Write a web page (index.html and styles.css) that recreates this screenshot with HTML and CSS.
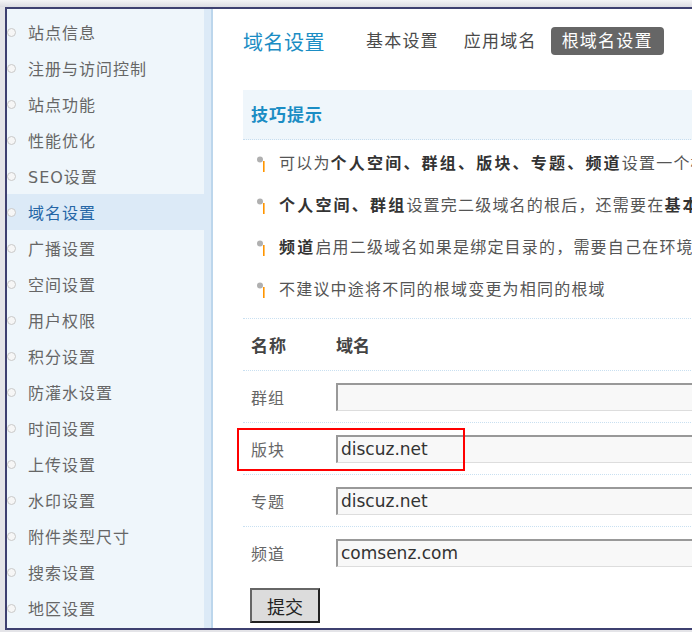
FILE: index.html
```html
<!DOCTYPE html>
<html lang="zh-CN">
<head>
    <meta charset="UTF-8">
    <title>域名设置</title>
    <link rel="stylesheet" href="styles.css">
</head>
<body>
    <div class="frame">
        <!-- 左侧菜单 -->
        <ul class="side-menu">
            <li><i></i>站点信息</li>
            <li><i></i>注册与访问控制</li>
            <li><i></i>站点功能</li>
            <li><i></i>性能优化</li>
            <li><i></i>SEO设置</li>
            <li class="active"><i></i>域名设置</li>
            <li><i></i>广播设置</li>
            <li><i></i>空间设置</li>
            <li><i></i>用户权限</li>
            <li><i></i>积分设置</li>
            <li><i></i>防灌水设置</li>
            <li><i></i>时间设置</li>
            <li><i></i>上传设置</li>
            <li><i></i>水印设置</li>
            <li><i></i>附件类型尺寸</li>
            <li><i></i>搜索设置</li>
            <li><i></i>地区设置</li>
        </ul>

        <!-- 主内容 -->
        <div class="main">
            <div class="page-head">
                <h3>域名设置</h3>
                <div class="tabs">
                    <a>基本设置</a>
                    <a>应用域名</a>
                    <a class="current">根域名设置</a>
                </div>
            </div>

            <div class="tips-title">技巧提示</div>
            <ul class="tips">
                <li><svg width="10" height="20" viewBox="0 0 10 20"><circle cx="3" cy="7.5" r="3" fill="#b0b0b0"/><rect x="6" y="9" width="1.6" height="11" fill="#ff9500"/></svg><span>可以为<b>个人空间、群组、版块、专题、频道</b>设置一个根域名</span></li>
                <li><svg width="10" height="20" viewBox="0 0 10 20"><circle cx="3" cy="7.5" r="3" fill="#b0b0b0"/><rect x="6" y="9" width="1.6" height="11" fill="#ff9500"/></svg><span><b>个人空间、群组</b>设置完二级域名的根后，还需要在<b>基本设置</b>中开启</span></li>
                <li><svg width="10" height="20" viewBox="0 0 10 20"><circle cx="3" cy="7.5" r="3" fill="#b0b0b0"/><rect x="6" y="9" width="1.6" height="11" fill="#ff9500"/></svg><span><b>频道</b>启用二级域名如果是绑定目录的，需要自己在环境中配置</span></li>
                <li><svg width="10" height="20" viewBox="0 0 10 20"><circle cx="3" cy="7.5" r="3" fill="#b0b0b0"/><rect x="6" y="9" width="1.6" height="11" fill="#ff9500"/></svg><span>不建议中途将不同的根域变更为相同的根域</span></li>
            </ul>

            <div class="domain-table">
                <div class="row header">
                    <div class="label">名称</div>
                    <div class="value">域名</div>
                </div>
                <div class="row">
                    <div class="label">群组</div>
                    <input class="value" type="text" value="">
                </div>
                <div class="row">
                    <div class="label">版块</div>
                    <input class="value" type="text" value="discuz.net">
                </div>
                <div class="row">
                    <div class="label">专题</div>
                    <input class="value" type="text" value="discuz.net">
                </div>
                <div class="row">
                    <div class="label">频道</div>
                    <input class="value" type="text" value="comsenz.com">
                </div>
                <!-- 红框标注 -->
                <div class="mark"></div>
            </div>
            <button class="btn">提交</button>
        </div>
    </div>
</body>
</html>
```

FILE: styles.css
```css
html, body {
    overflow: hidden;
}
body {
    margin: 0;
    height: 632px;
    font-family: "DejaVu Sans", "Noto Sans CJK SC", sans-serif;
    background: linear-gradient(#f4f4f6, #dcdce2 7px, #e4e4e8 7px);
}
.frame {
    display: flex;
    box-sizing: border-box;
    width: 1100px;
    height: 623px;
    margin: 7px 0 0 5px;
    border: 2px solid #3e4070;
    border-right: none;
    background: #fff;
}
.side-menu {
    list-style: none;
    margin: 0;
    padding: 5px 0 0 0;
    box-sizing: border-box;
    width: 206px;
    flex-shrink: 0;
    border-right: 2px solid #bcd6ec;
    background: linear-gradient(to right, #eff6fb 197px, #dceaf7 197px);
}
.side-menu li {
    display: flex;
    align-items: center;
    height: 36px;
    font-size: 16px;
    letter-spacing: 1px;
    color: #666;
}
.side-menu li i {
    display: block;
    box-sizing: border-box;
    width: 9px;
    height: 9px;
    margin: 0 12px 0 0;
    border: 1px solid #c9c9c9;
    border-radius: 50%;
    background: #f6f6f6;
}
.side-menu li.active {
    background: #dceaf7;
    color: #2566a6;
}
.main {
    flex: 1;
    padding-left: 30px;
    background: #fff;
}
.page-head {
    display: flex;
    align-items: center;
    height: 28px;
    margin-top: 18px;
    margin-bottom: 35px;
}
.page-head h3 {
    margin: 0 30px 0 0;
    font-size: 20px;
    font-weight: normal;
    letter-spacing: 0.5px;
    color: #1b8dc4;
}
.tabs {
    display: flex;
    gap: 3px;
}
.tabs a {
    display: block;
    height: 28px;
    line-height: 28px;
    padding: 0 11px;
    font-size: 17px;
    letter-spacing: 1.2px;
    color: #4a4a4a;
    border-radius: 4px;
}
.tabs a.current {
    background: #666;
    color: #fff;
}
.tips-title {
    height: 50px;
    line-height: 50px;
    padding-left: 8px;
    font-size: 17px;
    font-weight: bold;
    letter-spacing: 1px;
    color: #1b8dc4;
    background: #eff6fb;
    border-bottom: 1px dotted #c6ddef;
    box-sizing: border-box;
}
.tips {
    list-style: none;
    margin: 1px 0 0 0;
    padding: 0 0 0 14px;
}
.tips li {
    display: flex;
    align-items: center;
    height: 42px;
    font-size: 16px;
    letter-spacing: 1.2px;
    color: #555;
    white-space: nowrap;
}
.tips li svg {
    margin-right: 12px;
    flex-shrink: 0;
}
.tips li b {
    letter-spacing: 2.2px;
    color: #333;
}
.domain-table {
    position: relative;
    margin-top: 9px;
}
.row {
    display: flex;
    align-items: center;
    box-sizing: border-box;
    height: 52px;
    border-top: 1px dotted #c9e0f1;
}
.row:last-of-type {
    border-bottom: 1px dotted #c9e0f1;
}
.row .label {
    width: 85px;
    padding-left: 8px;
    flex-shrink: 0;
    font-size: 16px;
    letter-spacing: 1px;
    color: #666;
}
.row.header .label,
.row.header .value {
    font-size: 17px;
    font-weight: bold;
    color: #444;
}
.row input.value {
    flex: 1;
    box-sizing: border-box;
    height: 28px;
    margin: 0;
    padding: 0 3px;
    font-family: "DejaVu Sans", sans-serif;
    font-size: 17px;
    color: #333;
    background: #f8f8f8;
    border-style: solid;
    border-width: 2px 1px 1px 2px;
    border-color: #999 #ddd #ddd #999;
    outline: none;
}
.mark {
    position: absolute;
    left: -6px;
    top: 110px;
    width: 228px;
    height: 43px;
    box-sizing: border-box;
    border: 2px solid #f00;
}
.btn {
    display: block;
    width: 70px;
    height: 35px;
    margin: 10px 0 0 7px;
    padding: 0;
    font-family: "Noto Sans CJK SC", sans-serif;
    font-size: 18px;
    color: #222;
    background: #dcdcdc;
    border: 2px solid;
    border-color: #666 #222 #222 #666;
}
```
